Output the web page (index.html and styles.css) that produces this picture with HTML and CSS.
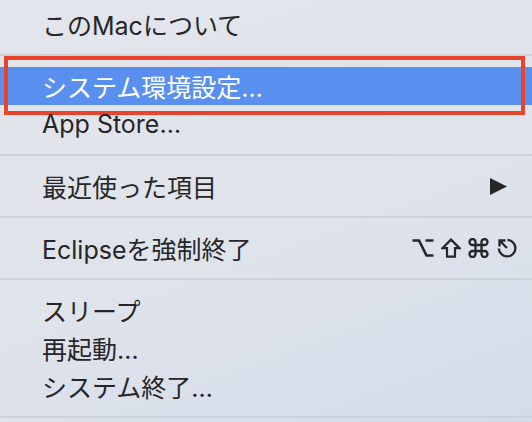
FILE: index.html
```html
<!DOCTYPE html>
<html lang="ja">
<head>
<meta charset="utf-8">
<link rel="stylesheet" href="styles.css">
</head>
<body>
<div class="menu">
  <div class="item">このMacについて</div>
  <div class="sep"></div>
  <div class="item selected">システム環境設定…<span class="callout"></span></div>
  <div class="item">App Store…</div>
  <div class="sep"></div>
  <div class="item">最近使った項目
    <svg class="arrow" width="17" height="17" viewBox="0 0 17 17"><polygon points="0,0 17,8.5 0,17" fill="#262628"/></svg>
  </div>
  <div class="sep"></div>
  <div class="item">Eclipseを強制終了
    <span class="shortcut">
      <svg width="22" height="20" viewBox="0 0 22 20"><path d="M0.5 2.5 H7 L14.5 17.5 H21.5 M13.5 2.5 H21.5" fill="none" stroke="#262628" stroke-width="2.6"/></svg>
      <svg width="20" height="20" viewBox="0 0 20 20"><path d="M10 1.6 L18.6 10.2 H14 V18.6 H6 V10.2 H1.4 Z" fill="none" stroke="#262628" stroke-width="2.2" stroke-linejoin="miter"/></svg>
      <svg width="21" height="20" viewBox="0 0 20 20"><path d="M7 13 V4 A3 3 0 1 0 4 7 H16 A3 3 0 1 0 13 4 V16 A3 3 0 1 0 16 13 H4 A3 3 0 1 0 7 16 Z" fill="none" stroke="#262628" stroke-width="2.3"/></svg>
      <svg width="22" height="22" viewBox="0 0 22 22"><path d="M11.5 2.8 A8.3 8.3 0 1 1 2.8 11.5" fill="none" stroke="#262628" stroke-width="2.3"/><path d="M3.5 3.5 L11 11 M3.5 9.5 V3.5 H9.5" fill="none" stroke="#262628" stroke-width="2.3"/></svg>
    </span>
  </div>
  <div class="sep"></div>
  <div class="item">スリープ</div>
  <div class="item">再起動…</div>
  <div class="item">システム終了…</div>
  <div class="sep"></div>
</div>
</body>
</html>
```

FILE: styles.css
```css
html, body {
  margin: 0;
  padding: 0;
}
body {
  width: 532px;
  height: 422px;
  overflow: hidden;
  background: linear-gradient(160deg, #e3e5ec 0%, #dfe3ea 55%, #d4dcea 100%);
  font-family: "Inter", "Noto Sans CJK JP", sans-serif;
  font-size: 25px;
  color: #262628;
}
.menu {
  padding-top: 5px;
  display: flex;
  flex-direction: column;
}
.item {
  position: relative;
  height: 38px;
  display: flex;
  align-items: center;
  padding-left: 42px;
  padding-right: 14px;
  white-space: nowrap;
}
.selected {
  background: #5990f0;
  color: #ffffff;
}
.callout {
  position: absolute;
  left: 4px;
  right: 7px;
  top: -11px;
  bottom: -10px;
  border: 4px solid #e8442c;
  box-sizing: border-box;
}
.sep {
  height: 2px;
  margin: 11px 0;
  background: #cdd1d9;
}
.arrow {
  margin-left: auto;
  margin-right: 11px;
}
.shortcut {
  margin-left: auto;
  display: flex;
  align-items: center;
  gap: 7px;
}
.shortcut svg {
  display: block;
}
```
